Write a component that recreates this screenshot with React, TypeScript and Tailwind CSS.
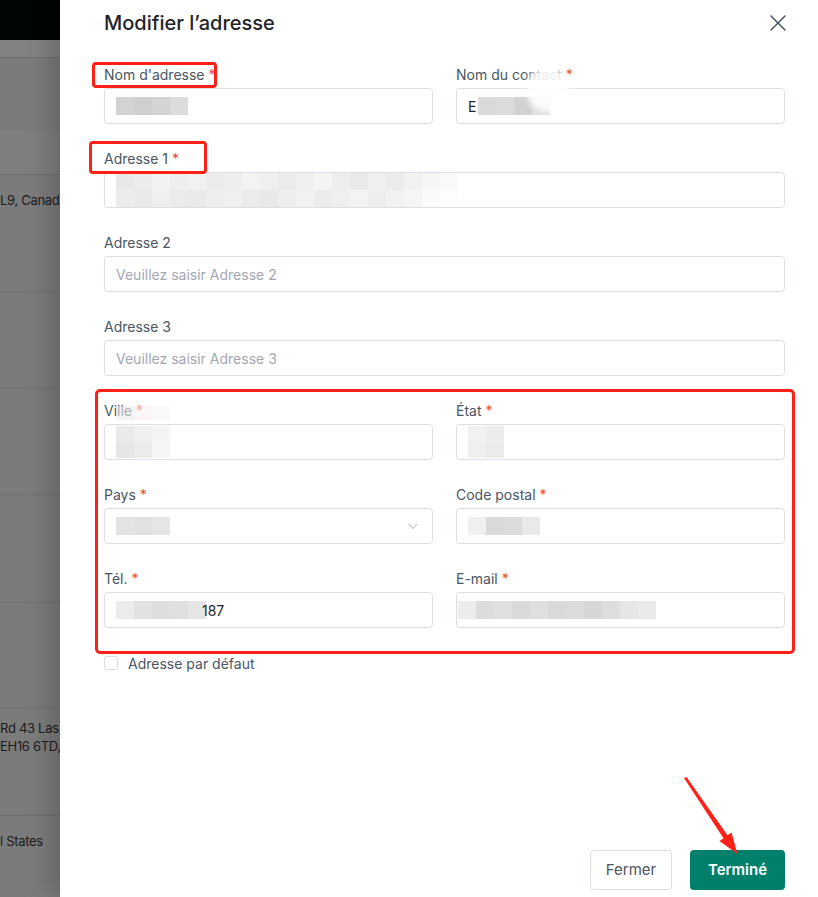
import * as React from 'react';

/* ---------- blurred / pixelated values (annotation mosaics) ---------- */

function Mosaic({ rows, cell = 'h-[18px] w-[18px]' }: { rows: string[][]; cell?: string }): React.JSX.Element {
  return (
    <div className="flex flex-col">
      {rows.map((row, i) => (
        <div key={i} className="flex">
          {row.map((c, j) => (
            <div key={j} className={`${cell} ${c}`} />
          ))}
        </div>
      ))}
    </div>
  );
}

function Req(): React.JSX.Element {
  return <span className="ml-[4px] text-[#f53f3f]">*</span>;
}

function Label({ children, required = true }: { children: React.ReactNode; required?: boolean }): React.JSX.Element {
  return (
    <div className="mb-[4px] h-[20px] text-[14px] leading-[22px] text-[#4b5563]">
      {children}
      {required && <Req />}
    </div>
  );
}

function Box({ children, className = '' }: { children?: React.ReactNode; className?: string }): React.JSX.Element {
  return (
    <div
      className={`flex h-[36px] items-center rounded-[4px] border border-[#dcdfe6] bg-white px-[11px] text-[14px] text-[#1f2329] ${className}`}
    >
      {children}
    </div>
  );
}

function Placeholder({ text }: { text: string }): React.JSX.Element {
  return (
    <Box>
      <span className="text-[#a3a8b3]">{text}</span>
    </Box>
  );
}

function Chevron(): React.JSX.Element {
  return (
    <svg width="12" height="12" viewBox="0 0 12 12" fill="none" aria-hidden="true">
      <path d="M1.5 4l4.5 4.5L10.5 4" stroke="#a8abb2" strokeWidth="1" />
    </svg>
  );
}

function IconClose(): React.JSX.Element {
  return (
    <svg width="16" height="16" viewBox="0 0 16 16" fill="none" aria-hidden="true">
      <path d="M1 1l14 14M15 1L1 15" stroke="#4b5563" strokeWidth="1.5" strokeLinecap="round" />
    </svg>
  );
}

/* ---------- the dimmed page behind the drawer ---------- */

function Backdrop(): React.JSX.Element {
  return (
    <div className="flex w-[60px] shrink-0 flex-col overflow-hidden bg-[#7b7b7b] text-[13px] leading-[18px] tracking-[-0.3px] text-[#1c1c1c]">
      <div className="h-[40px] bg-[#010605]" />
      <div className="h-[18px] border-b border-[#6f6f6f] bg-[#828282]" />
      <div className="h-[73px]" />
      <div className="h-[44px] border-b border-[#6f6f6f] bg-[#7e7e7e]" />
      <div className="h-[117px] border-b border-[#6f6f6f] pt-[16px]">
        <div className="whitespace-nowrap">L9, Canad</div>
      </div>
      <div className="h-[97px] border-b border-[#6f6f6f]" />
      <div className="h-[106px] border-b border-[#6f6f6f]" />
      <div className="h-[108px] border-b border-[#6f6f6f]" />
      <div className="h-[105px] border-b border-[#6f6f6f]" />
      <div className="h-[108px] border-b border-[#6f6f6f] pt-[11px]">
        <div className="whitespace-nowrap">Rd 43 Las</div>
        <div className="whitespace-nowrap">EH16 6TD,</div>
      </div>
      <div className="pt-[16px]">
        <div className="whitespace-nowrap">l States</div>
      </div>
    </div>
  );
}

/* ---------- annotation overlays (red boxes + arrow) ---------- */

function Annotations(): React.JSX.Element {
  return (
    <>
      <div className="pointer-events-none absolute left-[92px] top-[62px] h-[26px] w-[125px] rounded-[4px] border-[3px] border-[#ff2117]" />
      <div className="pointer-events-none absolute left-[89px] top-[141px] h-[33px] w-[118px] rounded-[4px] border-[3px] border-[#ff2117]" />
      <div className="pointer-events-none absolute left-[95px] top-[389px] h-[265px] w-[700px] rounded-[5px] border-[3px] border-[#ff2117]" />
      <svg
        className="pointer-events-none absolute inset-0"
        width="818"
        height="897"
        viewBox="0 0 818 897"
        aria-hidden="true"
      >
        <polygon
          points="684,778 686.5,777 727.5,835.3 731.5,832.5 737.5,854 719.5,841 723.5,838.3"
          fill="#ff2117"
        />
      </svg>
    </>
  );
}

export default function App(): React.JSX.Element {
  return (
    <div className="relative flex h-[897px] w-[818px] overflow-hidden bg-white font-['Inter',sans-serif]">
      <Backdrop />

      <aside className="relative z-10 flex flex-1 flex-col bg-white pl-[44px] pr-[33px] shadow-[-10px_0_22px_rgba(0,0,0,0.18)]">
        {/* header */}
        <div className="flex h-[44px] items-center justify-between pt-[1px]">
          <h2 className="text-[20px] font-medium leading-[28px] text-[#1f2329]">Modifier l’adresse</h2>
          <button type="button" aria-label="Fermer" className="-mr-[1px] flex h-[16px] w-[16px] items-center justify-center">
            <IconClose />
          </button>
        </div>

        {/* form */}
        <div className="mt-[20px] flex flex-col gap-[24px]">
          <div className="grid grid-cols-2 gap-x-[23px]">
            <div>
              <Label>Nom d'adresse</Label>
              <Box>
                <Mosaic rows={[['bg-[#d3d3d3]', 'bg-[#cfcfcf]', 'bg-[#d4d4d4]', 'bg-[#dcdcdc]']]} />
              </Box>
            </div>
            <div className="relative">
              <Label>Nom du contact</Label>
              <Box>
                <span className="mr-[2px]">E</span>
                <Mosaic rows={[['bg-[#dadada]', 'bg-[#dcdcdc]', 'bg-[#d2d2d2]', 'bg-[#dedede]']]} />
              </Box>
              <div className="absolute left-[70px] top-[2px] h-[46px] w-[44px] rounded-[50%] bg-white/90 blur-[3px]" />
            </div>
          </div>

          <div>
            <Label>Adresse 1</Label>
            <Box className="overflow-hidden px-[11px]">
              <Mosaic
                rows={[
                  ['bg-[#e8e8e8]', 'bg-[#ececec]', 'bg-[#f2f2f2]', 'bg-[#eeeeee]', 'bg-[#f1f1f1]', 'bg-[#ececec]', 'bg-[#eeeeee]', 'bg-[#f3f3f3]', 'bg-[#efefef]', 'bg-[#ebebeb]', 'bg-[#f0f0f0]', 'bg-[#f4f4f4]', 'bg-[#ededed]', 'bg-[#eaeaea]', 'bg-[#f0f0f0]', 'bg-[#ebebeb]', 'bg-[#f2f2f2]', 'bg-[#f6f6f6]', 'bg-[#f9f9f9]'],
                  ['bg-[#ececec]', 'bg-[#eaeaea]', 'bg-[#efefef]', 'bg-[#ebebeb]', 'bg-[#e9e9e9]', 'bg-[#eeeeee]', 'bg-[#f0f0f0]', 'bg-[#ebebeb]', 'bg-[#e8e8e8]', 'bg-[#eeeeee]', 'bg-[#f1f1f1]', 'bg-[#ececec]', 'bg-[#efefef]', 'bg-[#f3f3f3]', 'bg-[#eeeeee]', 'bg-[#f2f2f2]', 'bg-[#f5f5f5]', 'bg-[#fafafa]', 'bg-[#fdfdfd]'],
                ]}
              />
            </Box>
          </div>

          <div>
            <Label required={false}>Adresse 2</Label>
            <Placeholder text="Veuillez saisir Adresse 2" />
          </div>

          <div>
            <Label required={false}>Adresse 3</Label>
            <Placeholder text="Veuillez saisir Adresse 3" />
          </div>

          <div className="grid grid-cols-2 gap-x-[23px]">
            <div className="relative">
              <Label>Ville</Label>
              <Box>
                <Mosaic
                  cell="h-[16px] w-[18px]"
                  rows={[
                    ['bg-[#eaeaea]', 'bg-[#f0f0f0]', 'bg-[#f4f4f4]'],
                    ['bg-[#e6e6e6]', 'bg-[#ebebeb]', 'bg-[#f6f6f6]'],
                  ]}
                />
              </Box>
              <div className="absolute left-[12px] top-[6px] flex opacity-60">
                <div className="h-[14px] w-[18px] bg-[#ececec]" />
                <div className="h-[14px] w-[18px] bg-[#fbefef]" />
                <div className="h-[14px] w-[18px] bg-[#f6f6f6]" />
              </div>
            </div>
            <div>
              <Label>État</Label>
              <Box>
                <Mosaic
                  cell="h-[16px] w-[18px]"
                  rows={[
                    ['bg-[#f1f1f1]', 'bg-[#ececec]'],
                    ['bg-[#efefef]', 'bg-[#ebebeb]'],
                  ]}
                />
              </Box>
            </div>
          </div>

          <div className="grid grid-cols-2 gap-x-[23px]">
            <div>
              <Label>Pays</Label>
              <Box className="justify-between pr-[13px]">
                <Mosaic rows={[['bg-[#e3e3e3]', 'bg-[#e1e1e1]', 'bg-[#e5e5e5]']]} />
                <Chevron />
              </Box>
            </div>
            <div>
              <Label>Code postal</Label>
              <Box>
                <Mosaic rows={[['bg-[#f0f0f0]', 'bg-[#dadada]', 'bg-[#dcdcdc]', 'bg-[#e9e9e9]']]} />
              </Box>
            </div>
          </div>

          <div className="grid grid-cols-2 gap-x-[23px]">
            <div>
              <Label>Tél.</Label>
              <Box>
                <Mosaic rows={[['bg-[#ebebeb]', 'bg-[#e2e2e2]', 'bg-[#dedede]', 'bg-[#e0e0e0]', 'bg-[#e6e6e6]']]} />
                <span className="-ml-[4px]">187</span>
              </Box>
            </div>
            <div>
              <Label>E-mail</Label>
              <Box className="pl-[1px]">
                <Mosaic
                  rows={[
                    ['bg-[#ececec]', 'bg-[#dcdcdc]', 'bg-[#e0e0e0]', 'bg-[#dadada]', 'bg-[#dfdfdf]', 'bg-[#d9d9d9]', 'bg-[#dcdcdc]', 'bg-[#d6d6d6]', 'bg-[#dddddd]', 'bg-[#e6e6e6]', 'bg-[#eaeaea]'],
                  ]}
                />
              </Box>
            </div>
          </div>
        </div>

        {/* default address */}
        <label className="mt-[25px] flex h-[20px] items-center gap-[10px] text-[14px] text-[#4b5563]">
          <span className="h-[14px] w-[14px] rounded-[2px] border border-[#dcdfe6] bg-white" />
          Adresse par défaut
        </label>

        {/* footer */}
        <div className="mt-auto flex justify-end gap-[18px] pb-[7px]">
          <button
            type="button"
            className="h-[40px] w-[82px] rounded-[4px] border border-[#dcdfe6] bg-white text-[15px] text-[#4b5563]"
          >
            Fermer
          </button>
          <button
            type="button"
            className="h-[40px] w-[95px] rounded-[4px] bg-[#00806a] text-[15px] font-semibold text-white"
          >
            Terminé
          </button>
        </div>
      </aside>

      <div className="absolute inset-0 z-20">
        <Annotations />
      </div>
    </div>
  );
}
